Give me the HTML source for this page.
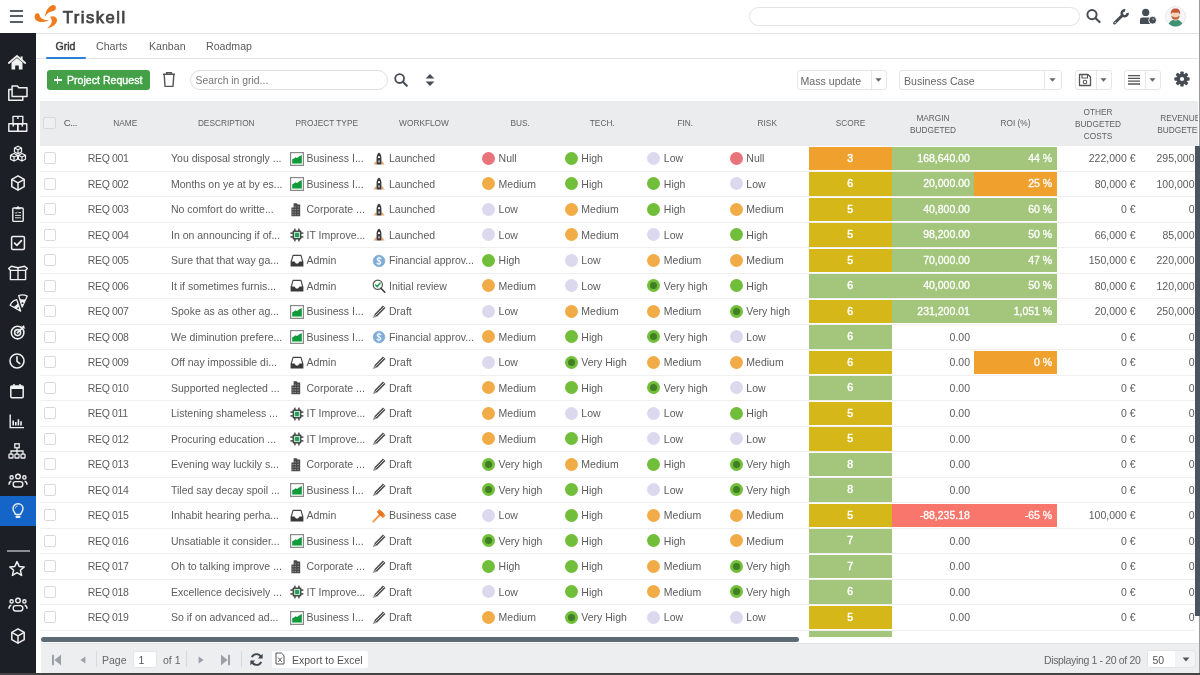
<!DOCTYPE html><html><head><meta charset="utf-8"><style>
*{box-sizing:border-box;margin:0;padding:0}
html,body{width:1200px;height:675px;overflow:hidden;background:#fff}
body{position:relative;font-family:"Liberation Sans",sans-serif;color:#555}
.a{position:absolute}
.t{position:absolute;white-space:nowrap;font-size:10.5px;line-height:12px;color:#5c5c5c}
.hd{position:absolute;top:100.5px;height:45.5px;background:#ebeced;border-right:1px solid #fbfbfb}
.ht{position:absolute;left:0;right:0;text-align:center;font-size:9.6px;line-height:11.9px;letter-spacing:0;color:#616161;white-space:nowrap;transform:scaleX(0.865)}
.rs{position:absolute;left:40px;width:1156px;height:1px;background:#eeeeee}
.cb{position:absolute;width:12px;height:12px;border:1px solid #d9d9d9;border-radius:2px;background:#fff}
.dot{position:absolute;width:13px;height:13px;border-radius:50%}
.cell{position:absolute;color:#fff;font-size:10.5px;line-height:23.5px;white-space:nowrap;-webkit-text-stroke:0.3px #fff}
.sb{position:absolute;left:0;width:36px;height:30px}
</style></head><body><div class="a" style="left:0;top:0;width:1200px;height:675px;overflow:hidden;will-change:transform">
<div class="a" style="left:0;top:0;width:1200px;height:34px;background:#fff;border-bottom:1px solid #e4e4e4"></div>
<div class="a" style="left:10px;top:9.9px;width:13.4px;height:2px;background:#585e66"></div>
<div class="a" style="left:10px;top:15.3px;width:13.4px;height:2px;background:#585e66"></div>
<div class="a" style="left:10px;top:20.5px;width:13.4px;height:2px;background:#585e66"></div>
<svg class="a" style="left:32px;top:3px" width="28" height="27" viewBox="0 0 28 27">
<g fill="#ef7d1f">
<path d="M13 13.8 C13.2 9.2 15.5 4.2 19.5 2.4 C22 1.4 24.2 2.8 23.9 5.2 C23.6 7.4 21.6 8 20 8.3 C17 8.8 14.6 10.8 13 13.8 Z"/>
<path d="M16.8 17.6 C12.2 19.6 6.2 19.8 3.6 16.8 C2 14.8 2.4 11.2 4.8 10.3 C6.4 9.8 7.4 10.9 7.6 12.3 C8 15.4 12.2 17.2 16.8 17.6 Z"/>
<path d="M18 13.8 C20.8 12.4 24.6 13.2 25 16.8 C25.3 20.6 21.2 24 15 25.4 C18.4 22.6 20.4 19.8 19.8 17.2 C19.5 15.8 18.8 14.6 18 13.8 Z"/>
</g></svg>
<div class="a" style="left:62.8px;top:8px;font-size:16.6px;line-height:20px;font-weight:normal;color:#444;letter-spacing:1.5px;-webkit-text-stroke:0.75px #444">Triskell</div>
<div class="a" style="left:748.5px;top:6.8px;width:331px;height:19.5px;border:1px solid #e3e3e3;border-radius:10px;background:#fff"></div>
<svg class="a" style="left:1085px;top:7px" width="18" height="18" viewBox="0 0 18 18"><circle cx="7" cy="7.6" r="4.6" fill="none" stroke="#474d55" stroke-width="2"/><path d="M10.6 11.2 L14.6 15" stroke="#474d55" stroke-width="2.2" stroke-linecap="round"/></svg>
<svg class="a" style="left:1112px;top:7px" width="18" height="18" viewBox="0 0 18 18"><path d="M2.6 16 L10.4 8.4" stroke="#474d55" stroke-width="2.9" stroke-linecap="round"/><path d="M15.6 5.9 A2.95 2.95 0 1 1 13.2 3.4" fill="none" stroke="#474d55" stroke-width="2.6"/><circle cx="3.2" cy="15.4" r="0.6" fill="#fff"/></svg>
<svg class="a" style="left:1138px;top:7px" width="20" height="18" viewBox="0 0 20 18"><circle cx="7.7" cy="5.4" r="3.6" fill="#474d55"/><path d="M2 17 V12.6 C2 11.4 3 10.6 4.4 10.6 H11 C12.2 10.6 13 11.2 13.2 12 L13.2 17 Z" fill="#474d55"/><circle cx="14.6" cy="13.2" r="3.9" fill="#474d55" stroke="#fff" stroke-width="0.9"/><circle cx="15.2" cy="12.2" r="0.9" fill="#9aa0a6"/></svg>
<svg class="a" style="left:1165.3px;top:5.8px" width="21" height="21" viewBox="0 0 21 21">
<defs><clipPath id="avc"><circle cx="10.5" cy="10.5" r="10"/></clipPath></defs>
<circle cx="10.5" cy="10.5" r="10" fill="#f7f6f9" stroke="#dcdcdc" stroke-width="0.7"/>
<g clip-path="url(#avc)">
<path d="M3.2 21 C3.2 15.5 7 13.8 10.5 13.8 C14 13.8 17.8 15.5 17.8 21 Z" fill="#3f9272"/>
<rect x="9" y="11.5" width="3" height="3" fill="#f3d2b5"/>
<path d="M6.4 6.5 H14.6 V10.5 C14.6 13 12.6 14 10.5 14 C8.4 14 6.4 13 6.4 10.5 Z" fill="#f5d4b8"/>
<path d="M6.4 9.4 C6.6 12.8 8.4 13.6 10.5 13.6 C12.6 13.6 14.4 12.8 14.6 9.4 C13.6 10.6 12.2 11.2 10.5 11.2 C8.8 11.2 7.4 10.6 6.4 9.4 Z" fill="#b8653f"/>
<path d="M5.8 8.6 C5.4 4 7.4 2.4 10.5 2.4 C13.6 2.4 15.6 4 15.2 8.6 C14.6 7.4 14 6.6 13.4 6.4 C11.5 6.8 9.5 6.8 7.6 6.4 C7 6.6 6.4 7.4 5.8 8.6 Z" fill="#c4583a"/>
</g></svg>
<div class="a" style="left:1198.6px;top:0;width:1.4px;height:675px;background:#9a9a9a"></div>
<div class="a" style="left:0;top:33.4px;width:36px;height:642px;background:#1c1f25"></div>
<div class="a" style="left:0;top:495.5px;width:36px;height:30.3px;background:#1565c9"></div>
<div class="a" style="left:7px;top:550.4px;width:23px;height:1.2px;background:#8b8f96"></div>
<svg class="a" style="left:8.0px;top:53.4px" width="20" height="20" viewBox="0 0 20 20"><path d="M0.8 10 L9 3 L17.2 10" fill="none" stroke="#f0f0f0" stroke-width="1.8" stroke-linejoin="round" stroke-linecap="round"/><path d="M3.5 9.5 L9 5 L14.5 9.5 V16.5 H10.8 V12.5 H7.2 V16.5 H3.5 Z" fill="#f0f0f0"/><rect x="12.6" y="3.4" width="2" height="4" fill="#f0f0f0"/></svg>
<svg class="a" style="left:8.0px;top:83.1px" width="20" height="20" viewBox="0 0 20 20"><path d="M4.1 6.4 H0.8 V17.2 H14.8 V13.6" fill="none" stroke="#f0f0f0" stroke-width="1.5" stroke-linejoin="round"/><path d="M4.1 13.6 V3 H9.4 L10.8 4.8 H19 V13.6 Z" fill="#1c1f25" stroke="#f0f0f0" stroke-width="1.5" stroke-linejoin="round"/></svg>
<svg class="a" style="left:8.0px;top:113.0px" width="20" height="20" viewBox="0 0 20 20"><g fill="none" stroke="#f0f0f0" stroke-width="1.4" stroke-linejoin="round"><rect x="5" y="3.4" width="9.8" height="7.3"/><rect x="0.8" y="10.7" width="9" height="7.5"/><rect x="9.8" y="10.7" width="9" height="7.5"/></g><path d="M9.9 3.4 V6 M5.3 10.7 V13.4 M14.3 10.7 V13.4" stroke="#f0f0f0" stroke-width="1.5"/></svg>
<svg class="a" style="left:8.0px;top:143.6px" width="20" height="20" viewBox="0 0 20 20"><g fill="none" stroke="#f0f0f0" stroke-width="1.1" stroke-linejoin="round" transform="translate(10 9.6) scale(1.1 1.05) translate(-10 -9.6)"><path d="M10 2.5 L13.2 4.2 V8 L10 9.7 L6.8 8 V4.2 Z M6.8 4.2 L10 5.9 L13.2 4.2 M10 5.9 V9.7"/><path d="M6.4 9.5 L9.6 11.2 V15 L6.4 16.7 L3.2 15 V11.2 Z M3.2 11.2 L6.4 12.9 L9.6 11.2 M6.4 12.9 V16.7"/><path d="M13.6 9.5 L16.8 11.2 V15 L13.6 16.7 L10.4 15 V11.2 Z M10.4 11.2 L13.6 12.9 L16.8 11.2 M13.6 12.9 V16.7"/></g></svg>
<svg class="a" style="left:8.0px;top:172.6px" width="20" height="20" viewBox="0 0 20 20"><g fill="none" stroke="#f0f0f0" stroke-width="1.5" stroke-linejoin="round"><path d="M10 2.8 L16.2 6.3 V13.7 L10 17.2 L3.8 13.7 V6.3 Z"/><path d="M3.8 6.3 L10 9.8 L16.2 6.3 M10 9.8 V17.2"/></g></svg>
<svg class="a" style="left:8.0px;top:203.8px" width="20" height="20" viewBox="0 0 20 20"><g fill="none" stroke="#f0f0f0" stroke-width="1.4" stroke-linejoin="round"><rect x="4.8" y="4" width="10.4" height="13.4" rx="1"/></g><path d="M7.4 5.2 V3.6 H8.8 L10 1.8 L11.2 3.6 H12.6 V5.2 Z" fill="#f0f0f0"/><path d="M7 8.4 L8 9.4 L9.4 7.8 M10.4 8.6 H13 M7 11.4 H13 M7 13.8 H13" stroke="#f0f0f0" stroke-width="0.9" fill="none"/></svg>
<svg class="a" style="left:8.0px;top:232.9px" width="20" height="20" viewBox="0 0 20 20"><rect x="3.6" y="3.6" width="12.8" height="12.8" rx="1.2" fill="none" stroke="#f0f0f0" stroke-width="1.5"/><path d="M6.6 10.2 L8.9 12.4 L13.4 7.6" fill="none" stroke="#f0f0f0" stroke-width="1.7" stroke-linecap="round" stroke-linejoin="round"/></svg>
<svg class="a" style="left:8.0px;top:262.0px" width="20" height="20" viewBox="0 0 20 20"><g fill="none" stroke="#f0f0f0" stroke-width="1.4" stroke-linejoin="round"><path d="M2.4 8.2 V17.6 H17.6 V8.2"/><path d="M10 5.8 V17.6"/><path d="M0.6 6.6 L3.4 4.2 L10 5.8 L16.6 4.2 L19.4 6.6 L17.4 8.4 H2.6 Z"/></g></svg>
<svg class="a" style="left:8.0px;top:291.8px" width="20" height="20" viewBox="0 0 20 20"><g transform="translate(5.2,10.2) rotate(-40) translate(-4.5,-0.6)"><path d="M0.2 1 Q4.5 -1 8.8 1 L4.5 12.2 Z" fill="none" stroke="#f0f0f0" stroke-width="1.3" stroke-linejoin="round"/><path d="M1.6 4.6 H7.4 L4.5 12 Z" fill="#f0f0f0"/><circle cx="4.5" cy="8.4" r="0.9" fill="#1c1f25"/></g><g transform="translate(15,3.4) rotate(4) translate(-4.5,-0.6)"><path d="M0.2 1 Q4.5 -1 8.8 1 L4.5 12.2 Z" fill="none" stroke="#f0f0f0" stroke-width="1.3" stroke-linejoin="round"/><path d="M1.6 4.6 H7.4 L4.5 12 Z" fill="#f0f0f0"/><circle cx="4.5" cy="8.4" r="0.9" fill="#1c1f25"/></g></svg>
<svg class="a" style="left:8.0px;top:321.8px" width="20" height="20" viewBox="0 0 20 20"><g fill="none" stroke="#f0f0f0" stroke-width="1.6"><circle cx="9.6" cy="10.6" r="6.3"/><circle cx="9.6" cy="10.6" r="3"/></g><circle cx="9.6" cy="10.6" r="1.1" fill="#f0f0f0"/><path d="M9.6 10.6 L14.6 5.6" stroke="#f0f0f0" stroke-width="1.6"/><path d="M13.2 3.2 L14.4 4.6 L16 3 L16.6 5.4 L17.4 6.4 L15.4 6.6 L14 5.2 Z" fill="#f0f0f0"/></svg>
<svg class="a" style="left:6.800000000000001px;top:351.0px" width="20" height="20" viewBox="0 0 20 20"><circle cx="10" cy="10" r="7" fill="none" stroke="#f0f0f0" stroke-width="1.6"/><path d="M10 5.8 V10.4 L12.8 12.6" fill="none" stroke="#f0f0f0" stroke-width="1.6" stroke-linecap="round"/></svg>
<svg class="a" style="left:6.800000000000001px;top:381.2px" width="20" height="20" viewBox="0 0 20 20"><rect x="3.8" y="5" width="12.4" height="11.8" rx="1.2" fill="none" stroke="#f0f0f0" stroke-width="1.5"/><rect x="3.8" y="5" width="12.4" height="3" fill="#f0f0f0"/><path d="M7 3 V6 M13 3 V6" stroke="#f0f0f0" stroke-width="1.5"/></svg>
<svg class="a" style="left:6.800000000000001px;top:411.0px" width="20" height="20" viewBox="0 0 20 20"><path d="M3.2 3.5 V16.6 H17" fill="none" stroke="#f0f0f0" stroke-width="1.4"/><path d="M6.2 9.5 V14.4 M8.8 11 V14.4 M11.4 8.2 V14.4 M14 10.2 V14.4" stroke="#f0f0f0" stroke-width="1.6"/></svg>
<svg class="a" style="left:7.399999999999999px;top:440.8px" width="20" height="20" viewBox="0 0 20 20"><g fill="none" stroke="#f0f0f0" stroke-width="1.3"><rect x="7.8" y="2.8" width="4.4" height="4"/><rect x="2" y="13.2" width="4" height="3.8" rx="0.6"/><rect x="8" y="13.2" width="4" height="3.8" rx="0.6"/><rect x="14" y="13.2" width="4" height="3.8" rx="0.6"/><path d="M10 6.8 V13.2 M4 13.2 V10 H16 V13.2"/></g></svg>
<svg class="a" style="left:8.0px;top:470.6px" width="20" height="20" viewBox="0 0 20 20"><g fill="none" stroke="#f0f0f0" stroke-width="1.4"><circle cx="10" cy="5.6" r="2.3"/><circle cx="3.6" cy="6.4" r="1.6"/><circle cx="16.4" cy="6.4" r="1.6"/><rect x="5.2" y="10.6" width="9.6" height="5.4" rx="2.4"/><path d="M1 13.8 C1 11.6 2 10.4 3.4 10.2 M19 13.8 C19 11.6 18 10.4 16.6 10.2"/></g></svg>
<svg class="a" style="left:8.0px;top:500.6px" width="20" height="20" viewBox="0 0 20 20"><path d="M10 2.8 C13 2.8 15 5 15 7.8 C15 10 13.2 11.4 12.6 13.4 H7.4 C6.8 11.4 5 10 5 7.8 C5 5 7 2.8 10 2.8 Z" fill="none" stroke="#f0f0f0" stroke-width="1.4"/><rect x="7.6" y="14.4" width="4.8" height="2.6" rx="0.8" fill="#f0f0f0"/><path d="M7.4 7.4 C7.4 6 8.4 5 9.6 5" fill="none" stroke="#f0f0f0" stroke-width="0.9"/></svg>
<svg class="a" style="left:7.0px;top:559.4px" width="20" height="20" viewBox="0 0 20 20"><path d="M10 2.6 L12.2 7.4 L17.2 7.9 L13.4 11.3 L14.6 16.4 L10 13.7 L5.4 16.4 L6.6 11.3 L2.8 7.9 L7.8 7.4 Z" fill="none" stroke="#f0f0f0" stroke-width="1.5" stroke-linejoin="round"/></svg>
<svg class="a" style="left:8.0px;top:595.4px" width="20" height="20" viewBox="0 0 20 20"><g fill="none" stroke="#f0f0f0" stroke-width="1.4"><circle cx="10" cy="5.6" r="2.3"/><circle cx="3.6" cy="6.4" r="1.6"/><circle cx="16.4" cy="6.4" r="1.6"/><rect x="5.2" y="10.6" width="9.6" height="5.4" rx="2.4"/><path d="M1 13.8 C1 11.6 2 10.4 3.4 10.2 M19 13.8 C19 11.6 18 10.4 16.6 10.2"/></g></svg>
<svg class="a" style="left:8.0px;top:625.8px" width="20" height="20" viewBox="0 0 20 20"><g fill="none" stroke="#f0f0f0" stroke-width="1.5" stroke-linejoin="round"><path d="M10 2.8 L16.2 6.3 V13.7 L10 17.2 L3.8 13.7 V6.3 Z"/><path d="M3.8 6.3 L10 9.8 L16.2 6.3 M10 9.8 V17.2"/></g></svg>
<div class="a" style="left:36px;top:57.8px;width:1162px;height:1px;background:#e6e6e6"></div>
<div class="a" style="left:45.8px;top:56.8px;width:40.2px;height:2.4px;background:#2a7fd6;border-radius:1px"></div>
<div class="a" style="left:55.5px;top:40px;font-size:10.6px;line-height:12px;color:#3a3a3a;-webkit-text-stroke:0.4px #3a3a3a;">Grid</div>
<div class="a" style="left:96px;top:40px;font-size:10.6px;line-height:12px;color:#5c5c5c;">Charts</div>
<div class="a" style="left:149px;top:40px;font-size:10.6px;line-height:12px;color:#5c5c5c;">Kanban</div>
<div class="a" style="left:206px;top:40px;font-size:10.6px;line-height:12px;color:#5c5c5c;">Roadmap</div>
<div class="a" style="left:46.5px;top:70px;width:103px;height:20px;background:#43a047;border-radius:3px"></div>
<div class="a" style="left:53.5px;top:79.2px;width:8px;height:1.7px;background:#fff"></div>
<div class="a" style="left:56.65px;top:76px;width:1.7px;height:8px;background:#fff"></div>
<div class="a" style="left:67px;top:74px;font-size:10.6px;line-height:12px;color:#fff;font-weight:normal;-webkit-text-stroke:0.35px #fff;letter-spacing:0px">Project Request</div>
<svg class="a" style="left:161px;top:71px" width="16" height="17" viewBox="0 0 16 17"><path d="M2 3.2 H14 M5.6 3.2 V1.6 H10.4 V3.2" fill="none" stroke="#555" stroke-width="1.4"/><path d="M3.2 3.6 L4 15.4 H12 L12.8 3.6" fill="none" stroke="#555" stroke-width="1.4" stroke-linejoin="round"/></svg>
<div class="a" style="left:190px;top:70.2px;width:198px;height:19.4px;border:1px solid #dedede;border-radius:10px;background:#fff"></div>
<div class="a" style="left:195.5px;top:74.7px;font-size:10.4px;line-height:12px;color:#777">Search in grid...</div>
<svg class="a" style="left:393px;top:72px" width="16" height="16" viewBox="0 0 16 16"><circle cx="6.6" cy="6.6" r="4.4" fill="none" stroke="#474d55" stroke-width="1.8"/><path d="M9.8 9.8 L13.8 13.8" stroke="#474d55" stroke-width="2.1" stroke-linecap="round"/></svg>
<svg class="a" style="left:424px;top:72px" width="12" height="16" viewBox="0 0 12 16"><path d="M1.6 6.6 L6 2 L10.4 6.6 Z M1.6 9.4 L6 14 L10.4 9.4 Z" fill="#474d55"/></svg>
<div class="a" style="left:796.5px;top:70.2px;width:90.5px;height:19.4px;border:1px solid #e6e6e6;border-radius:3px;background:#fff"></div>
<div class="a" style="left:870.5px;top:71px;width:1px;height:18px;background:#e6e6e6"></div>
<svg class="a" style="left:875.25px;top:78px" width="7" height="4" viewBox="0 0 7 4"><path d="M0.4 0.3 H6.6 L3.5 3.7 Z" fill="#666"/></svg>
<div class="a" style="left:800.5px;top:74.9px;font-size:10.6px;line-height:12px;color:#666">Mass update</div>
<div class="a" style="left:899px;top:70.2px;width:163px;height:19.4px;border:1px solid #e6e6e6;border-radius:3px;background:#fff"></div>
<div class="a" style="left:1043.5px;top:71px;width:1px;height:18px;background:#e6e6e6"></div>
<svg class="a" style="left:1049.25px;top:78px" width="7" height="4" viewBox="0 0 7 4"><path d="M0.4 0.3 H6.6 L3.5 3.7 Z" fill="#666"/></svg>
<div class="a" style="left:904px;top:74.9px;font-size:10.6px;line-height:12px;color:#666">Business Case</div>
<div class="a" style="left:1074.5px;top:70.2px;width:37.5px;height:19.4px;border:1px solid #e6e6e6;border-radius:3px;background:#fff"></div>
<div class="a" style="left:1095.5px;top:71px;width:1px;height:18px;background:#e6e6e6"></div>
<svg class="a" style="left:1100.25px;top:78px" width="7" height="4" viewBox="0 0 7 4"><path d="M0.4 0.3 H6.6 L3.5 3.7 Z" fill="#666"/></svg>
<svg class="a" style="left:1077px;top:72px" width="16" height="16" viewBox="0 0 16 16"><path d="M2.5 2.5 H11 L13.5 5 V13.5 H2.5 Z" fill="none" stroke="#555" stroke-width="1.3" stroke-linejoin="round"/><path d="M5 2.5 V6 H10.5 V2.5" fill="none" stroke="#555" stroke-width="1.1"/><circle cx="8" cy="10" r="1.8" fill="none" stroke="#555" stroke-width="1.1"/></svg>
<div class="a" style="left:1124px;top:70.2px;width:37px;height:19.4px;border:1px solid #e6e6e6;border-radius:3px;background:#fff"></div>
<div class="a" style="left:1144.5px;top:71px;width:1px;height:18px;background:#e6e6e6"></div>
<svg class="a" style="left:1149.25px;top:78px" width="7" height="4" viewBox="0 0 7 4"><path d="M0.4 0.3 H6.6 L3.5 3.7 Z" fill="#666"/></svg>
<svg class="a" style="left:1126px;top:72px" width="16" height="16" viewBox="0 0 16 16"><path d="M2 3.6 H14 M2 6.4 H14 M2 9.2 H14 M2 12 H14" stroke="#555" stroke-width="1.3"/></svg>
<svg class="a" style="left:1174.2px;top:71.2px" width="16" height="16" viewBox="0 0 16 16"><g fill="#474d55"><circle cx="8" cy="8" r="5.6"/><rect x="6.3" y="0.4" width="3.4" height="3.4" rx="0.9" transform="rotate(0 8 8)"/><rect x="6.3" y="0.4" width="3.4" height="3.4" rx="0.9" transform="rotate(45 8 8)"/><rect x="6.3" y="0.4" width="3.4" height="3.4" rx="0.9" transform="rotate(90 8 8)"/><rect x="6.3" y="0.4" width="3.4" height="3.4" rx="0.9" transform="rotate(135 8 8)"/><rect x="6.3" y="0.4" width="3.4" height="3.4" rx="0.9" transform="rotate(180 8 8)"/><rect x="6.3" y="0.4" width="3.4" height="3.4" rx="0.9" transform="rotate(225 8 8)"/><rect x="6.3" y="0.4" width="3.4" height="3.4" rx="0.9" transform="rotate(270 8 8)"/><rect x="6.3" y="0.4" width="3.4" height="3.4" rx="0.9" transform="rotate(315 8 8)"/></g><circle cx="8" cy="8" r="2.1" fill="#fff"/></svg>
<div class="a" style="left:40px;top:100.5px;width:1158px;height:45.5px;overflow:hidden">
<div class="hd" style="left:0px;top:0;width:45px"></div>
<div class="cb" style="left:3.3px;top:16.4px;width:12.5px;height:12.5px;background:#eeeff0;border-color:#d9d9d9"></div>
<div class="t" style="left:23.8px;top:16.6px;font-size:9.8px;color:#5a5a5a;letter-spacing:-0.5px">C...</div>
<div class="hd" style="left:44px;top:0;width:83.5px"></div>
<div class="ht" style="left:44px;width:82.5px;top:16.95px">NAME</div>
<div class="hd" style="left:126.5px;top:0;width:119.5px"></div>
<div class="ht" style="left:126.5px;width:118.5px;top:16.95px">DESCRIPTION</div>
<div class="hd" style="left:245px;top:0;width:84.5px"></div>
<div class="ht" style="left:245px;width:83.5px;top:16.95px">PROJECT TYPE</div>
<div class="hd" style="left:328.5px;top:0;width:111.0px"></div>
<div class="ht" style="left:328.5px;width:110.0px;top:16.95px">WORKFLOW</div>
<div class="hd" style="left:438.5px;top:0;width:83.5px"></div>
<div class="ht" style="left:438.5px;width:82.5px;top:16.95px">BUS.</div>
<div class="hd" style="left:521px;top:0;width:83.5px"></div>
<div class="ht" style="left:521px;width:82.5px;top:16.95px">TECH.</div>
<div class="hd" style="left:603.5px;top:0;width:83.5px"></div>
<div class="ht" style="left:603.5px;width:82.5px;top:16.95px">FIN.</div>
<div class="hd" style="left:686px;top:0;width:83.5px"></div>
<div class="ht" style="left:686px;width:82.5px;top:16.95px">RISK</div>
<div class="hd" style="left:768.5px;top:0;width:84.0px"></div>
<div class="ht" style="left:768.5px;width:83.0px;top:16.95px">SCORE</div>
<div class="hd" style="left:851.5px;top:0;width:83.0px"></div>
<div class="ht" style="left:851.5px;width:82.0px;top:11.799999999999999px">MARGIN<br>BUDGETED</div>
<div class="hd" style="left:933.5px;top:0;width:84.0px"></div>
<div class="ht" style="left:933.5px;width:83.0px;top:16.95px">ROI (%)</div>
<div class="hd" style="left:1016.5px;top:0;width:83.0px"></div>
<div class="ht" style="left:1016.5px;width:82.0px;top:5.25px">OTHER<br>BUDGETED<br>COSTS</div>
<div class="hd" style="left:1098.5px;top:0;width:83.5px"></div>
<div class="ht" style="left:1098.5px;width:82.5px;top:11.799999999999999px">REVENUE<br>BUDGETED</div>
</div>
<div class="a" style="left:40px;top:146px;width:1155px;height:490.5px;overflow:hidden">
<div class="a" style="left:0;top:24.80px;width:1155px;height:1px;background:#efefef"></div>
<div class="a" style="left:0;top:50.30px;width:1155px;height:1px;background:#efefef"></div>
<div class="a" style="left:0;top:75.80px;width:1155px;height:1px;background:#efefef"></div>
<div class="a" style="left:0;top:101.30px;width:1155px;height:1px;background:#efefef"></div>
<div class="a" style="left:0;top:126.80px;width:1155px;height:1px;background:#efefef"></div>
<div class="a" style="left:0;top:152.30px;width:1155px;height:1px;background:#efefef"></div>
<div class="a" style="left:0;top:177.80px;width:1155px;height:1px;background:#efefef"></div>
<div class="a" style="left:0;top:203.30px;width:1155px;height:1px;background:#efefef"></div>
<div class="a" style="left:0;top:228.80px;width:1155px;height:1px;background:#efefef"></div>
<div class="a" style="left:0;top:254.30px;width:1155px;height:1px;background:#efefef"></div>
<div class="a" style="left:0;top:279.80px;width:1155px;height:1px;background:#efefef"></div>
<div class="a" style="left:0;top:305.30px;width:1155px;height:1px;background:#efefef"></div>
<div class="a" style="left:0;top:330.80px;width:1155px;height:1px;background:#efefef"></div>
<div class="a" style="left:0;top:356.30px;width:1155px;height:1px;background:#efefef"></div>
<div class="a" style="left:0;top:381.80px;width:1155px;height:1px;background:#efefef"></div>
<div class="a" style="left:0;top:407.30px;width:1155px;height:1px;background:#efefef"></div>
<div class="a" style="left:0;top:432.80px;width:1155px;height:1px;background:#efefef"></div>
<div class="a" style="left:0;top:458.30px;width:1155px;height:1px;background:#efefef"></div>
<div class="a" style="left:0;top:483.80px;width:1155px;height:1px;background:#efefef"></div>
<div class="a" style="left:0;top:509.30px;width:1155px;height:1px;background:#efefef"></div>
<div class="cb" style="left:4.299999999999997px;top:6.30px"></div>
<div class="t" style="left:47.8px;top:6.30px;letter-spacing:-0.35px">REQ 001</div>
<div class="t" style="left:131px;top:6.30px">You disposal strongly ...</div>
<div class="a" style="left:249.5px;top:5.60px;width:14px;height:14px"><svg width="14" height="14" viewBox="0 0 14 14"><rect x="0.6" y="0.6" width="12.8" height="12.8" fill="#fff" stroke="#8a8a8a" stroke-width="1.2"/><path d="M2.2 11.8 V7.2 L4 6.4 L5.5 5.2 L7 6 L9 4.6 L11.8 3 V11.8 Z" fill="#0f9a3c"/><path d="M2.2 11.8 H11.8" stroke="#a8e6b8" stroke-width="0.8"/></svg></div>
<div class="t" style="left:266.5px;top:6.30px">Business I...</div>
<div class="a" style="left:331.5px;top:5.60px;width:14px;height:14px"><svg width="14" height="14" viewBox="0 0 14 14"><path d="M1.4 12.6 L4.6 8.2 V12.6 Z M12.6 12.6 L9.4 8.2 V12.6 Z" fill="#f0a56a"/><path d="M7 0.4 C8.6 1.6 9.4 3.4 9.4 5.6 V12.6 H4.6 V5.6 C4.6 3.4 5.4 1.6 7 0.4 Z" fill="#3a3a3a"/><circle cx="7" cy="5.2" r="1.1" fill="#fff"/><rect x="6.3" y="8.4" width="1.4" height="2" fill="#ddd"/></svg></div>
<div class="t" style="left:349px;top:6.30px">Launched</div>
<div class="dot" style="left:441.8px;top:5.90px;background:#e9737b"></div>
<div class="t" style="left:458.6px;top:6.30px">Null</div>
<div class="dot" style="left:524.5px;top:5.90px;background:#71be3a"></div>
<div class="t" style="left:541.3px;top:6.30px">High</div>
<div class="dot" style="left:607px;top:5.90px;background:#dcd9ef"></div>
<div class="t" style="left:623.8px;top:6.30px">Low</div>
<div class="dot" style="left:689.5px;top:5.90px;background:#e9737b"></div>
<div class="t" style="left:706.3px;top:6.30px">Null</div>
<div class="cell" style="left:769px;top:0.60px;width:82.5px;height:23.5px;background:#efa02d;text-align:center;-webkit-text-stroke:0.45px #fff">3</div>
<div class="cell" style="left:851.5px;top:0.60px;width:82.2px;height:23.5px;background:#a3c67c;text-align:right;padding-right:3.8px">168,640.00</div>
<div class="cell" style="left:933.7px;top:0.60px;width:83px;height:23.5px;background:#a3c67c;text-align:right;padding-right:4.5px">44 %</div>
<div class="t" style="left:1016.5px;top:6.30px;width:79px;text-align:right">222,000 €</div>
<div class="t" style="left:1098.5px;top:6.30px;width:56px;text-align:right">295,000</div>
<div class="cb" style="left:4.299999999999997px;top:31.80px"></div>
<div class="t" style="left:47.8px;top:31.80px;letter-spacing:-0.35px">REQ 002</div>
<div class="t" style="left:131px;top:31.80px">Months on ye at by es...</div>
<div class="a" style="left:249.5px;top:31.10px;width:14px;height:14px"><svg width="14" height="14" viewBox="0 0 14 14"><rect x="0.6" y="0.6" width="12.8" height="12.8" fill="#fff" stroke="#8a8a8a" stroke-width="1.2"/><path d="M2.2 11.8 V7.2 L4 6.4 L5.5 5.2 L7 6 L9 4.6 L11.8 3 V11.8 Z" fill="#0f9a3c"/><path d="M2.2 11.8 H11.8" stroke="#a8e6b8" stroke-width="0.8"/></svg></div>
<div class="t" style="left:266.5px;top:31.80px">Business I...</div>
<div class="a" style="left:331.5px;top:31.10px;width:14px;height:14px"><svg width="14" height="14" viewBox="0 0 14 14"><path d="M1.4 12.6 L4.6 8.2 V12.6 Z M12.6 12.6 L9.4 8.2 V12.6 Z" fill="#f0a56a"/><path d="M7 0.4 C8.6 1.6 9.4 3.4 9.4 5.6 V12.6 H4.6 V5.6 C4.6 3.4 5.4 1.6 7 0.4 Z" fill="#3a3a3a"/><circle cx="7" cy="5.2" r="1.1" fill="#fff"/><rect x="6.3" y="8.4" width="1.4" height="2" fill="#ddd"/></svg></div>
<div class="t" style="left:349px;top:31.80px">Launched</div>
<div class="dot" style="left:441.8px;top:31.40px;background:#f2ac47"></div>
<div class="t" style="left:458.6px;top:31.80px">Medium</div>
<div class="dot" style="left:524.5px;top:31.40px;background:#71be3a"></div>
<div class="t" style="left:541.3px;top:31.80px">High</div>
<div class="dot" style="left:607px;top:31.40px;background:#71be3a"></div>
<div class="t" style="left:623.8px;top:31.80px">High</div>
<div class="dot" style="left:689.5px;top:31.40px;background:#dcd9ef"></div>
<div class="t" style="left:706.3px;top:31.80px">Low</div>
<div class="cell" style="left:769px;top:26.10px;width:82.5px;height:23.5px;background:#d6b719;text-align:center;-webkit-text-stroke:0.45px #fff">6</div>
<div class="cell" style="left:851.5px;top:26.10px;width:82.2px;height:23.5px;background:#a3c67c;text-align:right;padding-right:3.8px">20,000.00</div>
<div class="cell" style="left:933.7px;top:26.10px;width:83px;height:23.5px;background:#efa02d;text-align:right;padding-right:4.5px">25 %</div>
<div class="t" style="left:1016.5px;top:31.80px;width:79px;text-align:right">80,000 €</div>
<div class="t" style="left:1098.5px;top:31.80px;width:56px;text-align:right">100,000</div>
<div class="cb" style="left:4.299999999999997px;top:57.30px"></div>
<div class="t" style="left:47.8px;top:57.30px;letter-spacing:-0.35px">REQ 003</div>
<div class="t" style="left:131px;top:57.30px">No comfort do writte...</div>
<div class="a" style="left:249.5px;top:56.60px;width:14px;height:14px"><svg width="14" height="14" viewBox="0 0 14 14"><path d="M1.4 4.4 H3.6 V0.2 H6.6 L7.8 1.6 H10.2 V13.2 H1.4 Z" fill="#4a4a4a"/><g fill="#a0a0a0" transform="translate(-0.6 0)"><rect x="3" y="6" width="1.2" height="1"/><rect x="5.3" y="3.4" width="1.2" height="1"/><rect x="8.1" y="3.4" width="1.2" height="1"/><rect x="3" y="8.6" width="1.2" height="1"/><rect x="5.3" y="6" width="1.2" height="1"/><rect x="8.1" y="6" width="1.2" height="1"/><rect x="3" y="11.1" width="1.2" height="1"/><rect x="5.3" y="8.6" width="1.2" height="1"/><rect x="8.1" y="8.6" width="1.2" height="1"/><rect x="5.3" y="11.1" width="1.2" height="1"/><rect x="8.1" y="11.1" width="1.2" height="1"/></g></svg></div>
<div class="t" style="left:266.5px;top:57.30px">Corporate ...</div>
<div class="a" style="left:331.5px;top:56.60px;width:14px;height:14px"><svg width="14" height="14" viewBox="0 0 14 14"><path d="M1.4 12.6 L4.6 8.2 V12.6 Z M12.6 12.6 L9.4 8.2 V12.6 Z" fill="#f0a56a"/><path d="M7 0.4 C8.6 1.6 9.4 3.4 9.4 5.6 V12.6 H4.6 V5.6 C4.6 3.4 5.4 1.6 7 0.4 Z" fill="#3a3a3a"/><circle cx="7" cy="5.2" r="1.1" fill="#fff"/><rect x="6.3" y="8.4" width="1.4" height="2" fill="#ddd"/></svg></div>
<div class="t" style="left:349px;top:57.30px">Launched</div>
<div class="dot" style="left:441.8px;top:56.90px;background:#dcd9ef"></div>
<div class="t" style="left:458.6px;top:57.30px">Low</div>
<div class="dot" style="left:524.5px;top:56.90px;background:#f2ac47"></div>
<div class="t" style="left:541.3px;top:57.30px">Medium</div>
<div class="dot" style="left:607px;top:56.90px;background:#71be3a"></div>
<div class="t" style="left:623.8px;top:57.30px">High</div>
<div class="dot" style="left:689.5px;top:56.90px;background:#f2ac47"></div>
<div class="t" style="left:706.3px;top:57.30px">Medium</div>
<div class="cell" style="left:769px;top:51.60px;width:82.5px;height:23.5px;background:#d6b719;text-align:center;-webkit-text-stroke:0.45px #fff">5</div>
<div class="cell" style="left:851.5px;top:51.60px;width:82.2px;height:23.5px;background:#a3c67c;text-align:right;padding-right:3.8px">40,800.00</div>
<div class="cell" style="left:933.7px;top:51.60px;width:83px;height:23.5px;background:#a3c67c;text-align:right;padding-right:4.5px">60 %</div>
<div class="t" style="left:1016.5px;top:57.30px;width:79px;text-align:right">0 €</div>
<div class="t" style="left:1098.5px;top:57.30px;width:56px;text-align:right">0</div>
<div class="cb" style="left:4.299999999999997px;top:82.80px"></div>
<div class="t" style="left:47.8px;top:82.80px;letter-spacing:-0.35px">REQ 004</div>
<div class="t" style="left:131px;top:82.80px">In on announcing if of...</div>
<div class="a" style="left:249.5px;top:82.10px;width:14px;height:14px"><svg width="14" height="14" viewBox="0 0 14 14"><g fill="#3e3e3e"><rect x="4.2" y="0.6" width="1.4" height="3"/><rect x="8.2" y="0.6" width="1.4" height="3"/><rect x="4.2" y="10.4" width="1.4" height="3"/><rect x="8.2" y="10.4" width="1.4" height="3"/><rect x="0.4" y="4.4" width="3" height="1.4"/><rect x="0.4" y="8.2" width="3" height="1.4"/><rect x="10.4" y="4.4" width="3" height="1.4"/><rect x="10.4" y="8.2" width="3" height="1.4"/><rect x="2.6" y="2.6" width="8.8" height="8.8" rx="0.8"/></g><rect x="3.9" y="3.9" width="6.2" height="6.2" fill="#aee6c4"/><rect x="5" y="5" width="4" height="4" rx="0.8" fill="#2a9a5c"/></svg></div>
<div class="t" style="left:266.5px;top:82.80px">IT Improve...</div>
<div class="a" style="left:331.5px;top:82.10px;width:14px;height:14px"><svg width="14" height="14" viewBox="0 0 14 14"><path d="M1.4 12.6 L4.6 8.2 V12.6 Z M12.6 12.6 L9.4 8.2 V12.6 Z" fill="#f0a56a"/><path d="M7 0.4 C8.6 1.6 9.4 3.4 9.4 5.6 V12.6 H4.6 V5.6 C4.6 3.4 5.4 1.6 7 0.4 Z" fill="#3a3a3a"/><circle cx="7" cy="5.2" r="1.1" fill="#fff"/><rect x="6.3" y="8.4" width="1.4" height="2" fill="#ddd"/></svg></div>
<div class="t" style="left:349px;top:82.80px">Launched</div>
<div class="dot" style="left:441.8px;top:82.40px;background:#dcd9ef"></div>
<div class="t" style="left:458.6px;top:82.80px">Low</div>
<div class="dot" style="left:524.5px;top:82.40px;background:#f2ac47"></div>
<div class="t" style="left:541.3px;top:82.80px">Medium</div>
<div class="dot" style="left:607px;top:82.40px;background:#dcd9ef"></div>
<div class="t" style="left:623.8px;top:82.80px">Low</div>
<div class="dot" style="left:689.5px;top:82.40px;background:#71be3a"></div>
<div class="t" style="left:706.3px;top:82.80px">High</div>
<div class="cell" style="left:769px;top:77.10px;width:82.5px;height:23.5px;background:#d6b719;text-align:center;-webkit-text-stroke:0.45px #fff">5</div>
<div class="cell" style="left:851.5px;top:77.10px;width:82.2px;height:23.5px;background:#a3c67c;text-align:right;padding-right:3.8px">98,200.00</div>
<div class="cell" style="left:933.7px;top:77.10px;width:83px;height:23.5px;background:#a3c67c;text-align:right;padding-right:4.5px">50 %</div>
<div class="t" style="left:1016.5px;top:82.80px;width:79px;text-align:right">66,000 €</div>
<div class="t" style="left:1098.5px;top:82.80px;width:56px;text-align:right">85,000</div>
<div class="cb" style="left:4.299999999999997px;top:108.30px"></div>
<div class="t" style="left:47.8px;top:108.30px;letter-spacing:-0.35px">REQ 005</div>
<div class="t" style="left:131px;top:108.30px">Sure that that way ga...</div>
<div class="a" style="left:249.5px;top:107.60px;width:14px;height:14px"><svg width="14" height="14" viewBox="0 0 14 14"><path d="M1.2 8 L3 1.4 H11 L12.8 8" fill="none" stroke="#444" stroke-width="1.1" stroke-linejoin="round"/><path d="M0.6 7.4 H4.4 L6 9.6 H8 L9.6 7.4 H13.4 V12.4 H0.6 Z" fill="#3a3a3a"/></svg></div>
<div class="t" style="left:266.5px;top:108.30px">Admin</div>
<div class="a" style="left:331.5px;top:107.60px;width:14px;height:14px"><svg width="14" height="14" viewBox="0 0 14 14"><circle cx="7" cy="7" r="5.8" fill="#80acd8" stroke="#6e9dcd" stroke-width="0.6"/><path d="M8.9 4.6 C8.4 4 7.7 3.8 7 3.8 C6 3.8 5.2 4.3 5.2 5.2 C5.2 6.1 6 6.4 7 6.8 C8 7.2 8.8 7.6 8.8 8.6 C8.8 9.6 8 10.1 7 10.1 C6.1 10.1 5.4 9.8 5 9.2" fill="none" stroke="#eef5ff" stroke-width="1.3" stroke-linecap="round"/><path d="M7 2.6 V11.4" stroke="#eef5ff" stroke-width="0.9"/></svg></div>
<div class="t" style="left:349px;top:108.30px">Financial approv...</div>
<div class="dot" style="left:441.8px;top:107.90px;background:#71be3a"></div>
<div class="t" style="left:458.6px;top:108.30px">High</div>
<div class="dot" style="left:524.5px;top:107.90px;background:#dcd9ef"></div>
<div class="t" style="left:541.3px;top:108.30px">Low</div>
<div class="dot" style="left:607px;top:107.90px;background:#f2ac47"></div>
<div class="t" style="left:623.8px;top:108.30px">Medium</div>
<div class="dot" style="left:689.5px;top:107.90px;background:#f2ac47"></div>
<div class="t" style="left:706.3px;top:108.30px">Medium</div>
<div class="cell" style="left:769px;top:102.60px;width:82.5px;height:23.5px;background:#d6b719;text-align:center;-webkit-text-stroke:0.45px #fff">5</div>
<div class="cell" style="left:851.5px;top:102.60px;width:82.2px;height:23.5px;background:#a3c67c;text-align:right;padding-right:3.8px">70,000.00</div>
<div class="cell" style="left:933.7px;top:102.60px;width:83px;height:23.5px;background:#a3c67c;text-align:right;padding-right:4.5px">47 %</div>
<div class="t" style="left:1016.5px;top:108.30px;width:79px;text-align:right">150,000 €</div>
<div class="t" style="left:1098.5px;top:108.30px;width:56px;text-align:right">220,000</div>
<div class="cb" style="left:4.299999999999997px;top:133.80px"></div>
<div class="t" style="left:47.8px;top:133.80px;letter-spacing:-0.35px">REQ 006</div>
<div class="t" style="left:131px;top:133.80px">It if sometimes furnis...</div>
<div class="a" style="left:249.5px;top:133.10px;width:14px;height:14px"><svg width="14" height="14" viewBox="0 0 14 14"><path d="M1.2 8 L3 1.4 H11 L12.8 8" fill="none" stroke="#444" stroke-width="1.1" stroke-linejoin="round"/><path d="M0.6 7.4 H4.4 L6 9.6 H8 L9.6 7.4 H13.4 V12.4 H0.6 Z" fill="#3a3a3a"/></svg></div>
<div class="t" style="left:266.5px;top:133.80px">Admin</div>
<div class="a" style="left:331.5px;top:133.10px;width:14px;height:14px"><svg width="14" height="14" viewBox="0 0 14 14"><circle cx="5.8" cy="5.8" r="4.6" fill="#f4fff8" stroke="#555" stroke-width="1.2"/><path d="M8.9 9.2 L12.8 13.2" stroke="#3a3a3a" stroke-width="1.6" stroke-linecap="round"/><path d="M3.6 6 L5.2 7.6 L8 4.2" fill="none" stroke="#2a9a5c" stroke-width="1.6" stroke-linecap="round"/></svg></div>
<div class="t" style="left:349px;top:133.80px">Initial review</div>
<div class="dot" style="left:441.8px;top:133.40px;background:#f2ac47"></div>
<div class="t" style="left:458.6px;top:133.80px">Medium</div>
<div class="dot" style="left:524.5px;top:133.40px;background:#dcd9ef"></div>
<div class="t" style="left:541.3px;top:133.80px">Low</div>
<div class="dot" style="left:607px;top:133.40px;background:#71be3a"></div>
<div class="dot" style="left:610px;top:136.40px;width:7px;height:7px;background:#417f24"></div>
<div class="t" style="left:623.8px;top:133.80px">Very high</div>
<div class="dot" style="left:689.5px;top:133.40px;background:#71be3a"></div>
<div class="t" style="left:706.3px;top:133.80px">High</div>
<div class="cell" style="left:769px;top:128.10px;width:82.5px;height:23.5px;background:#a3c67c;text-align:center;-webkit-text-stroke:0.45px #fff">6</div>
<div class="cell" style="left:851.5px;top:128.10px;width:82.2px;height:23.5px;background:#a3c67c;text-align:right;padding-right:3.8px">40,000.00</div>
<div class="cell" style="left:933.7px;top:128.10px;width:83px;height:23.5px;background:#a3c67c;text-align:right;padding-right:4.5px">50 %</div>
<div class="t" style="left:1016.5px;top:133.80px;width:79px;text-align:right">80,000 €</div>
<div class="t" style="left:1098.5px;top:133.80px;width:56px;text-align:right">120,000</div>
<div class="cb" style="left:4.299999999999997px;top:159.30px"></div>
<div class="t" style="left:47.8px;top:159.30px;letter-spacing:-0.35px">REQ 007</div>
<div class="t" style="left:131px;top:159.30px">Spoke as as other ag...</div>
<div class="a" style="left:249.5px;top:158.60px;width:14px;height:14px"><svg width="14" height="14" viewBox="0 0 14 14"><rect x="0.6" y="0.6" width="12.8" height="12.8" fill="#fff" stroke="#8a8a8a" stroke-width="1.2"/><path d="M2.2 11.8 V7.2 L4 6.4 L5.5 5.2 L7 6 L9 4.6 L11.8 3 V11.8 Z" fill="#0f9a3c"/><path d="M2.2 11.8 H11.8" stroke="#a8e6b8" stroke-width="0.8"/></svg></div>
<div class="t" style="left:266.5px;top:159.30px">Business I...</div>
<div class="a" style="left:331.5px;top:158.60px;width:14px;height:14px"><svg width="14" height="14" viewBox="0 0 14 14"><path d="M2.33 9.13 L10.93 0.53 L13.47 3.07 L4.87 11.67 Z" fill="#505050"/><path d="M3.6 10.4 L12.2 1.8" stroke="#e0e0e0" stroke-width="0.9"/><path d="M2.33 9.13 L4.87 11.67 L0.9 13.1 Z" fill="#8a8a8a"/></svg></div>
<div class="t" style="left:349px;top:159.30px">Draft</div>
<div class="dot" style="left:441.8px;top:158.90px;background:#dcd9ef"></div>
<div class="t" style="left:458.6px;top:159.30px">Low</div>
<div class="dot" style="left:524.5px;top:158.90px;background:#f2ac47"></div>
<div class="t" style="left:541.3px;top:159.30px">Medium</div>
<div class="dot" style="left:607px;top:158.90px;background:#f2ac47"></div>
<div class="t" style="left:623.8px;top:159.30px">Medium</div>
<div class="dot" style="left:689.5px;top:158.90px;background:#71be3a"></div>
<div class="dot" style="left:692.5px;top:161.90px;width:7px;height:7px;background:#417f24"></div>
<div class="t" style="left:706.3px;top:159.30px">Very high</div>
<div class="cell" style="left:769px;top:153.60px;width:82.5px;height:23.5px;background:#d6b719;text-align:center;-webkit-text-stroke:0.45px #fff">6</div>
<div class="cell" style="left:851.5px;top:153.60px;width:82.2px;height:23.5px;background:#a3c67c;text-align:right;padding-right:3.8px">231,200.01</div>
<div class="cell" style="left:933.7px;top:153.60px;width:83px;height:23.5px;background:#a3c67c;text-align:right;padding-right:4.5px">1,051 %</div>
<div class="t" style="left:1016.5px;top:159.30px;width:79px;text-align:right">20,000 €</div>
<div class="t" style="left:1098.5px;top:159.30px;width:56px;text-align:right">250,000</div>
<div class="cb" style="left:4.299999999999997px;top:184.80px"></div>
<div class="t" style="left:47.8px;top:184.80px;letter-spacing:-0.35px">REQ 008</div>
<div class="t" style="left:131px;top:184.80px">We diminution prefere...</div>
<div class="a" style="left:249.5px;top:184.10px;width:14px;height:14px"><svg width="14" height="14" viewBox="0 0 14 14"><rect x="0.6" y="0.6" width="12.8" height="12.8" fill="#fff" stroke="#8a8a8a" stroke-width="1.2"/><path d="M2.2 11.8 V7.2 L4 6.4 L5.5 5.2 L7 6 L9 4.6 L11.8 3 V11.8 Z" fill="#0f9a3c"/><path d="M2.2 11.8 H11.8" stroke="#a8e6b8" stroke-width="0.8"/></svg></div>
<div class="t" style="left:266.5px;top:184.80px">Business I...</div>
<div class="a" style="left:331.5px;top:184.10px;width:14px;height:14px"><svg width="14" height="14" viewBox="0 0 14 14"><circle cx="7" cy="7" r="5.8" fill="#80acd8" stroke="#6e9dcd" stroke-width="0.6"/><path d="M8.9 4.6 C8.4 4 7.7 3.8 7 3.8 C6 3.8 5.2 4.3 5.2 5.2 C5.2 6.1 6 6.4 7 6.8 C8 7.2 8.8 7.6 8.8 8.6 C8.8 9.6 8 10.1 7 10.1 C6.1 10.1 5.4 9.8 5 9.2" fill="none" stroke="#eef5ff" stroke-width="1.3" stroke-linecap="round"/><path d="M7 2.6 V11.4" stroke="#eef5ff" stroke-width="0.9"/></svg></div>
<div class="t" style="left:349px;top:184.80px">Financial approv...</div>
<div class="dot" style="left:441.8px;top:184.40px;background:#f2ac47"></div>
<div class="t" style="left:458.6px;top:184.80px">Medium</div>
<div class="dot" style="left:524.5px;top:184.40px;background:#71be3a"></div>
<div class="t" style="left:541.3px;top:184.80px">High</div>
<div class="dot" style="left:607px;top:184.40px;background:#71be3a"></div>
<div class="dot" style="left:610px;top:187.40px;width:7px;height:7px;background:#417f24"></div>
<div class="t" style="left:623.8px;top:184.80px">Very high</div>
<div class="dot" style="left:689.5px;top:184.40px;background:#dcd9ef"></div>
<div class="t" style="left:706.3px;top:184.80px">Low</div>
<div class="cell" style="left:769px;top:179.10px;width:82.5px;height:23.5px;background:#a3c67c;text-align:center;-webkit-text-stroke:0.45px #fff">6</div>
<div class="t" style="left:851.5px;top:184.80px;width:78.5px;text-align:right">0.00</div>
<div class="t" style="left:1016.5px;top:184.80px;width:79px;text-align:right">0 €</div>
<div class="t" style="left:1098.5px;top:184.80px;width:56px;text-align:right">0</div>
<div class="cb" style="left:4.299999999999997px;top:210.30px"></div>
<div class="t" style="left:47.8px;top:210.30px;letter-spacing:-0.35px">REQ 009</div>
<div class="t" style="left:131px;top:210.30px">Off nay impossible di...</div>
<div class="a" style="left:249.5px;top:209.60px;width:14px;height:14px"><svg width="14" height="14" viewBox="0 0 14 14"><path d="M1.2 8 L3 1.4 H11 L12.8 8" fill="none" stroke="#444" stroke-width="1.1" stroke-linejoin="round"/><path d="M0.6 7.4 H4.4 L6 9.6 H8 L9.6 7.4 H13.4 V12.4 H0.6 Z" fill="#3a3a3a"/></svg></div>
<div class="t" style="left:266.5px;top:210.30px">Admin</div>
<div class="a" style="left:331.5px;top:209.60px;width:14px;height:14px"><svg width="14" height="14" viewBox="0 0 14 14"><path d="M2.33 9.13 L10.93 0.53 L13.47 3.07 L4.87 11.67 Z" fill="#505050"/><path d="M3.6 10.4 L12.2 1.8" stroke="#e0e0e0" stroke-width="0.9"/><path d="M2.33 9.13 L4.87 11.67 L0.9 13.1 Z" fill="#8a8a8a"/></svg></div>
<div class="t" style="left:349px;top:210.30px">Draft</div>
<div class="dot" style="left:441.8px;top:209.90px;background:#dcd9ef"></div>
<div class="t" style="left:458.6px;top:210.30px">Low</div>
<div class="dot" style="left:524.5px;top:209.90px;background:#71be3a"></div>
<div class="dot" style="left:527.5px;top:212.90px;width:7px;height:7px;background:#417f24"></div>
<div class="t" style="left:541.3px;top:210.30px">Very High</div>
<div class="dot" style="left:607px;top:209.90px;background:#f2ac47"></div>
<div class="t" style="left:623.8px;top:210.30px">Medium</div>
<div class="dot" style="left:689.5px;top:209.90px;background:#f2ac47"></div>
<div class="t" style="left:706.3px;top:210.30px">Medium</div>
<div class="cell" style="left:769px;top:204.60px;width:82.5px;height:23.5px;background:#d6b719;text-align:center;-webkit-text-stroke:0.45px #fff">6</div>
<div class="t" style="left:851.5px;top:210.30px;width:78.5px;text-align:right">0.00</div>
<div class="cell" style="left:933.7px;top:204.60px;width:83px;height:23.5px;background:#efa02d;text-align:right;padding-right:4.5px">0 %</div>
<div class="t" style="left:1016.5px;top:210.30px;width:79px;text-align:right">0 €</div>
<div class="t" style="left:1098.5px;top:210.30px;width:56px;text-align:right">0</div>
<div class="cb" style="left:4.299999999999997px;top:235.80px"></div>
<div class="t" style="left:47.8px;top:235.80px;letter-spacing:-0.35px">REQ 010</div>
<div class="t" style="left:131px;top:235.80px">Supported neglected ...</div>
<div class="a" style="left:249.5px;top:235.10px;width:14px;height:14px"><svg width="14" height="14" viewBox="0 0 14 14"><path d="M1.4 4.4 H3.6 V0.2 H6.6 L7.8 1.6 H10.2 V13.2 H1.4 Z" fill="#4a4a4a"/><g fill="#a0a0a0" transform="translate(-0.6 0)"><rect x="3" y="6" width="1.2" height="1"/><rect x="5.3" y="3.4" width="1.2" height="1"/><rect x="8.1" y="3.4" width="1.2" height="1"/><rect x="3" y="8.6" width="1.2" height="1"/><rect x="5.3" y="6" width="1.2" height="1"/><rect x="8.1" y="6" width="1.2" height="1"/><rect x="3" y="11.1" width="1.2" height="1"/><rect x="5.3" y="8.6" width="1.2" height="1"/><rect x="8.1" y="8.6" width="1.2" height="1"/><rect x="5.3" y="11.1" width="1.2" height="1"/><rect x="8.1" y="11.1" width="1.2" height="1"/></g></svg></div>
<div class="t" style="left:266.5px;top:235.80px">Corporate ...</div>
<div class="a" style="left:331.5px;top:235.10px;width:14px;height:14px"><svg width="14" height="14" viewBox="0 0 14 14"><path d="M2.33 9.13 L10.93 0.53 L13.47 3.07 L4.87 11.67 Z" fill="#505050"/><path d="M3.6 10.4 L12.2 1.8" stroke="#e0e0e0" stroke-width="0.9"/><path d="M2.33 9.13 L4.87 11.67 L0.9 13.1 Z" fill="#8a8a8a"/></svg></div>
<div class="t" style="left:349px;top:235.80px">Draft</div>
<div class="dot" style="left:441.8px;top:235.40px;background:#f2ac47"></div>
<div class="t" style="left:458.6px;top:235.80px">Medium</div>
<div class="dot" style="left:524.5px;top:235.40px;background:#71be3a"></div>
<div class="t" style="left:541.3px;top:235.80px">High</div>
<div class="dot" style="left:607px;top:235.40px;background:#71be3a"></div>
<div class="dot" style="left:610px;top:238.40px;width:7px;height:7px;background:#417f24"></div>
<div class="t" style="left:623.8px;top:235.80px">Very high</div>
<div class="dot" style="left:689.5px;top:235.40px;background:#dcd9ef"></div>
<div class="t" style="left:706.3px;top:235.80px">Low</div>
<div class="cell" style="left:769px;top:230.10px;width:82.5px;height:23.5px;background:#a3c67c;text-align:center;-webkit-text-stroke:0.45px #fff">6</div>
<div class="t" style="left:851.5px;top:235.80px;width:78.5px;text-align:right">0.00</div>
<div class="t" style="left:1016.5px;top:235.80px;width:79px;text-align:right">0 €</div>
<div class="t" style="left:1098.5px;top:235.80px;width:56px;text-align:right">0</div>
<div class="cb" style="left:4.299999999999997px;top:261.30px"></div>
<div class="t" style="left:47.8px;top:261.30px;letter-spacing:-0.35px">REQ 011</div>
<div class="t" style="left:131px;top:261.30px">Listening shameless ...</div>
<div class="a" style="left:249.5px;top:260.60px;width:14px;height:14px"><svg width="14" height="14" viewBox="0 0 14 14"><g fill="#3e3e3e"><rect x="4.2" y="0.6" width="1.4" height="3"/><rect x="8.2" y="0.6" width="1.4" height="3"/><rect x="4.2" y="10.4" width="1.4" height="3"/><rect x="8.2" y="10.4" width="1.4" height="3"/><rect x="0.4" y="4.4" width="3" height="1.4"/><rect x="0.4" y="8.2" width="3" height="1.4"/><rect x="10.4" y="4.4" width="3" height="1.4"/><rect x="10.4" y="8.2" width="3" height="1.4"/><rect x="2.6" y="2.6" width="8.8" height="8.8" rx="0.8"/></g><rect x="3.9" y="3.9" width="6.2" height="6.2" fill="#aee6c4"/><rect x="5" y="5" width="4" height="4" rx="0.8" fill="#2a9a5c"/></svg></div>
<div class="t" style="left:266.5px;top:261.30px">IT Improve...</div>
<div class="a" style="left:331.5px;top:260.60px;width:14px;height:14px"><svg width="14" height="14" viewBox="0 0 14 14"><path d="M2.33 9.13 L10.93 0.53 L13.47 3.07 L4.87 11.67 Z" fill="#505050"/><path d="M3.6 10.4 L12.2 1.8" stroke="#e0e0e0" stroke-width="0.9"/><path d="M2.33 9.13 L4.87 11.67 L0.9 13.1 Z" fill="#8a8a8a"/></svg></div>
<div class="t" style="left:349px;top:261.30px">Draft</div>
<div class="dot" style="left:441.8px;top:260.90px;background:#f2ac47"></div>
<div class="t" style="left:458.6px;top:261.30px">Medium</div>
<div class="dot" style="left:524.5px;top:260.90px;background:#dcd9ef"></div>
<div class="t" style="left:541.3px;top:261.30px">Low</div>
<div class="dot" style="left:607px;top:260.90px;background:#dcd9ef"></div>
<div class="t" style="left:623.8px;top:261.30px">Low</div>
<div class="dot" style="left:689.5px;top:260.90px;background:#71be3a"></div>
<div class="t" style="left:706.3px;top:261.30px">High</div>
<div class="cell" style="left:769px;top:255.60px;width:82.5px;height:23.5px;background:#d6b719;text-align:center;-webkit-text-stroke:0.45px #fff">5</div>
<div class="t" style="left:851.5px;top:261.30px;width:78.5px;text-align:right">0.00</div>
<div class="t" style="left:1016.5px;top:261.30px;width:79px;text-align:right">0 €</div>
<div class="t" style="left:1098.5px;top:261.30px;width:56px;text-align:right">0</div>
<div class="cb" style="left:4.299999999999997px;top:286.80px"></div>
<div class="t" style="left:47.8px;top:286.80px;letter-spacing:-0.35px">REQ 012</div>
<div class="t" style="left:131px;top:286.80px">Procuring education ...</div>
<div class="a" style="left:249.5px;top:286.10px;width:14px;height:14px"><svg width="14" height="14" viewBox="0 0 14 14"><g fill="#3e3e3e"><rect x="4.2" y="0.6" width="1.4" height="3"/><rect x="8.2" y="0.6" width="1.4" height="3"/><rect x="4.2" y="10.4" width="1.4" height="3"/><rect x="8.2" y="10.4" width="1.4" height="3"/><rect x="0.4" y="4.4" width="3" height="1.4"/><rect x="0.4" y="8.2" width="3" height="1.4"/><rect x="10.4" y="4.4" width="3" height="1.4"/><rect x="10.4" y="8.2" width="3" height="1.4"/><rect x="2.6" y="2.6" width="8.8" height="8.8" rx="0.8"/></g><rect x="3.9" y="3.9" width="6.2" height="6.2" fill="#aee6c4"/><rect x="5" y="5" width="4" height="4" rx="0.8" fill="#2a9a5c"/></svg></div>
<div class="t" style="left:266.5px;top:286.80px">IT Improve...</div>
<div class="a" style="left:331.5px;top:286.10px;width:14px;height:14px"><svg width="14" height="14" viewBox="0 0 14 14"><path d="M2.33 9.13 L10.93 0.53 L13.47 3.07 L4.87 11.67 Z" fill="#505050"/><path d="M3.6 10.4 L12.2 1.8" stroke="#e0e0e0" stroke-width="0.9"/><path d="M2.33 9.13 L4.87 11.67 L0.9 13.1 Z" fill="#8a8a8a"/></svg></div>
<div class="t" style="left:349px;top:286.80px">Draft</div>
<div class="dot" style="left:441.8px;top:286.40px;background:#f2ac47"></div>
<div class="t" style="left:458.6px;top:286.80px">Medium</div>
<div class="dot" style="left:524.5px;top:286.40px;background:#71be3a"></div>
<div class="t" style="left:541.3px;top:286.80px">High</div>
<div class="dot" style="left:607px;top:286.40px;background:#dcd9ef"></div>
<div class="t" style="left:623.8px;top:286.80px">Low</div>
<div class="dot" style="left:689.5px;top:286.40px;background:#dcd9ef"></div>
<div class="t" style="left:706.3px;top:286.80px">Low</div>
<div class="cell" style="left:769px;top:281.10px;width:82.5px;height:23.5px;background:#d6b719;text-align:center;-webkit-text-stroke:0.45px #fff">5</div>
<div class="t" style="left:851.5px;top:286.80px;width:78.5px;text-align:right">0.00</div>
<div class="t" style="left:1016.5px;top:286.80px;width:79px;text-align:right">0 €</div>
<div class="t" style="left:1098.5px;top:286.80px;width:56px;text-align:right">0</div>
<div class="cb" style="left:4.299999999999997px;top:312.30px"></div>
<div class="t" style="left:47.8px;top:312.30px;letter-spacing:-0.35px">REQ 013</div>
<div class="t" style="left:131px;top:312.30px">Evening way luckily s...</div>
<div class="a" style="left:249.5px;top:311.60px;width:14px;height:14px"><svg width="14" height="14" viewBox="0 0 14 14"><path d="M1.4 4.4 H3.6 V0.2 H6.6 L7.8 1.6 H10.2 V13.2 H1.4 Z" fill="#4a4a4a"/><g fill="#a0a0a0" transform="translate(-0.6 0)"><rect x="3" y="6" width="1.2" height="1"/><rect x="5.3" y="3.4" width="1.2" height="1"/><rect x="8.1" y="3.4" width="1.2" height="1"/><rect x="3" y="8.6" width="1.2" height="1"/><rect x="5.3" y="6" width="1.2" height="1"/><rect x="8.1" y="6" width="1.2" height="1"/><rect x="3" y="11.1" width="1.2" height="1"/><rect x="5.3" y="8.6" width="1.2" height="1"/><rect x="8.1" y="8.6" width="1.2" height="1"/><rect x="5.3" y="11.1" width="1.2" height="1"/><rect x="8.1" y="11.1" width="1.2" height="1"/></g></svg></div>
<div class="t" style="left:266.5px;top:312.30px">Corporate ...</div>
<div class="a" style="left:331.5px;top:311.60px;width:14px;height:14px"><svg width="14" height="14" viewBox="0 0 14 14"><path d="M2.33 9.13 L10.93 0.53 L13.47 3.07 L4.87 11.67 Z" fill="#505050"/><path d="M3.6 10.4 L12.2 1.8" stroke="#e0e0e0" stroke-width="0.9"/><path d="M2.33 9.13 L4.87 11.67 L0.9 13.1 Z" fill="#8a8a8a"/></svg></div>
<div class="t" style="left:349px;top:312.30px">Draft</div>
<div class="dot" style="left:441.8px;top:311.90px;background:#71be3a"></div>
<div class="dot" style="left:444.8px;top:314.90px;width:7px;height:7px;background:#417f24"></div>
<div class="t" style="left:458.6px;top:312.30px">Very high</div>
<div class="dot" style="left:524.5px;top:311.90px;background:#f2ac47"></div>
<div class="t" style="left:541.3px;top:312.30px">Medium</div>
<div class="dot" style="left:607px;top:311.90px;background:#71be3a"></div>
<div class="t" style="left:623.8px;top:312.30px">High</div>
<div class="dot" style="left:689.5px;top:311.90px;background:#71be3a"></div>
<div class="dot" style="left:692.5px;top:314.90px;width:7px;height:7px;background:#417f24"></div>
<div class="t" style="left:706.3px;top:312.30px">Very high</div>
<div class="cell" style="left:769px;top:306.60px;width:82.5px;height:23.5px;background:#a3c67c;text-align:center;-webkit-text-stroke:0.45px #fff">8</div>
<div class="t" style="left:851.5px;top:312.30px;width:78.5px;text-align:right">0.00</div>
<div class="t" style="left:1016.5px;top:312.30px;width:79px;text-align:right">0 €</div>
<div class="t" style="left:1098.5px;top:312.30px;width:56px;text-align:right">0</div>
<div class="cb" style="left:4.299999999999997px;top:337.80px"></div>
<div class="t" style="left:47.8px;top:337.80px;letter-spacing:-0.35px">REQ 014</div>
<div class="t" style="left:131px;top:337.80px">Tiled say decay spoil ...</div>
<div class="a" style="left:249.5px;top:337.10px;width:14px;height:14px"><svg width="14" height="14" viewBox="0 0 14 14"><rect x="0.6" y="0.6" width="12.8" height="12.8" fill="#fff" stroke="#8a8a8a" stroke-width="1.2"/><path d="M2.2 11.8 V7.2 L4 6.4 L5.5 5.2 L7 6 L9 4.6 L11.8 3 V11.8 Z" fill="#0f9a3c"/><path d="M2.2 11.8 H11.8" stroke="#a8e6b8" stroke-width="0.8"/></svg></div>
<div class="t" style="left:266.5px;top:337.80px">Business I...</div>
<div class="a" style="left:331.5px;top:337.10px;width:14px;height:14px"><svg width="14" height="14" viewBox="0 0 14 14"><path d="M2.33 9.13 L10.93 0.53 L13.47 3.07 L4.87 11.67 Z" fill="#505050"/><path d="M3.6 10.4 L12.2 1.8" stroke="#e0e0e0" stroke-width="0.9"/><path d="M2.33 9.13 L4.87 11.67 L0.9 13.1 Z" fill="#8a8a8a"/></svg></div>
<div class="t" style="left:349px;top:337.80px">Draft</div>
<div class="dot" style="left:441.8px;top:337.40px;background:#71be3a"></div>
<div class="dot" style="left:444.8px;top:340.40px;width:7px;height:7px;background:#417f24"></div>
<div class="t" style="left:458.6px;top:337.80px">Very high</div>
<div class="dot" style="left:524.5px;top:337.40px;background:#71be3a"></div>
<div class="t" style="left:541.3px;top:337.80px">High</div>
<div class="dot" style="left:607px;top:337.40px;background:#dcd9ef"></div>
<div class="t" style="left:623.8px;top:337.80px">Low</div>
<div class="dot" style="left:689.5px;top:337.40px;background:#71be3a"></div>
<div class="dot" style="left:692.5px;top:340.40px;width:7px;height:7px;background:#417f24"></div>
<div class="t" style="left:706.3px;top:337.80px">Very high</div>
<div class="cell" style="left:769px;top:332.10px;width:82.5px;height:23.5px;background:#a3c67c;text-align:center;-webkit-text-stroke:0.45px #fff">8</div>
<div class="t" style="left:851.5px;top:337.80px;width:78.5px;text-align:right">0.00</div>
<div class="t" style="left:1016.5px;top:337.80px;width:79px;text-align:right">0 €</div>
<div class="t" style="left:1098.5px;top:337.80px;width:56px;text-align:right">0</div>
<div class="cb" style="left:4.299999999999997px;top:363.30px"></div>
<div class="t" style="left:47.8px;top:363.30px;letter-spacing:-0.35px">REQ 015</div>
<div class="t" style="left:131px;top:363.30px">Inhabit hearing perha...</div>
<div class="a" style="left:249.5px;top:362.60px;width:14px;height:14px"><svg width="14" height="14" viewBox="0 0 14 14"><path d="M1.2 8 L3 1.4 H11 L12.8 8" fill="none" stroke="#444" stroke-width="1.1" stroke-linejoin="round"/><path d="M0.6 7.4 H4.4 L6 9.6 H8 L9.6 7.4 H13.4 V12.4 H0.6 Z" fill="#3a3a3a"/></svg></div>
<div class="t" style="left:266.5px;top:363.30px">Admin</div>
<div class="a" style="left:331.5px;top:362.60px;width:14px;height:14px"><svg width="14" height="14" viewBox="0 0 14 14"><path d="M8.6 5 L1.2 12.6" stroke="#f0954d" stroke-width="1.8" stroke-linecap="round"/><rect x="4.6" y="2.6" width="9" height="4" rx="0.6" fill="#ed8533" transform="rotate(45 9.1 4.6)"/><rect x="7.1" y="2.6" width="4" height="4" fill="#e2711a" transform="rotate(45 9.1 4.6)"/></svg></div>
<div class="t" style="left:349px;top:363.30px">Business case</div>
<div class="dot" style="left:441.8px;top:362.90px;background:#dcd9ef"></div>
<div class="t" style="left:458.6px;top:363.30px">Low</div>
<div class="dot" style="left:524.5px;top:362.90px;background:#71be3a"></div>
<div class="t" style="left:541.3px;top:363.30px">High</div>
<div class="dot" style="left:607px;top:362.90px;background:#f2ac47"></div>
<div class="t" style="left:623.8px;top:363.30px">Medium</div>
<div class="dot" style="left:689.5px;top:362.90px;background:#f2ac47"></div>
<div class="t" style="left:706.3px;top:363.30px">Medium</div>
<div class="cell" style="left:769px;top:357.60px;width:82.5px;height:23.5px;background:#d6b719;text-align:center;-webkit-text-stroke:0.45px #fff">5</div>
<div class="cell" style="left:851.5px;top:357.60px;width:82.2px;height:23.5px;background:#f8766b;text-align:right;padding-right:3.8px">-88,235.18</div>
<div class="cell" style="left:933.7px;top:357.60px;width:83px;height:23.5px;background:#f8766b;text-align:right;padding-right:4.5px">-65 %</div>
<div class="t" style="left:1016.5px;top:363.30px;width:79px;text-align:right">100,000 €</div>
<div class="t" style="left:1098.5px;top:363.30px;width:56px;text-align:right">0</div>
<div class="cb" style="left:4.299999999999997px;top:388.80px"></div>
<div class="t" style="left:47.8px;top:388.80px;letter-spacing:-0.35px">REQ 016</div>
<div class="t" style="left:131px;top:388.80px">Unsatiable it consider...</div>
<div class="a" style="left:249.5px;top:388.10px;width:14px;height:14px"><svg width="14" height="14" viewBox="0 0 14 14"><rect x="0.6" y="0.6" width="12.8" height="12.8" fill="#fff" stroke="#8a8a8a" stroke-width="1.2"/><path d="M2.2 11.8 V7.2 L4 6.4 L5.5 5.2 L7 6 L9 4.6 L11.8 3 V11.8 Z" fill="#0f9a3c"/><path d="M2.2 11.8 H11.8" stroke="#a8e6b8" stroke-width="0.8"/></svg></div>
<div class="t" style="left:266.5px;top:388.80px">Business I...</div>
<div class="a" style="left:331.5px;top:388.10px;width:14px;height:14px"><svg width="14" height="14" viewBox="0 0 14 14"><path d="M2.33 9.13 L10.93 0.53 L13.47 3.07 L4.87 11.67 Z" fill="#505050"/><path d="M3.6 10.4 L12.2 1.8" stroke="#e0e0e0" stroke-width="0.9"/><path d="M2.33 9.13 L4.87 11.67 L0.9 13.1 Z" fill="#8a8a8a"/></svg></div>
<div class="t" style="left:349px;top:388.80px">Draft</div>
<div class="dot" style="left:441.8px;top:388.40px;background:#71be3a"></div>
<div class="dot" style="left:444.8px;top:391.40px;width:7px;height:7px;background:#417f24"></div>
<div class="t" style="left:458.6px;top:388.80px">Very high</div>
<div class="dot" style="left:524.5px;top:388.40px;background:#71be3a"></div>
<div class="t" style="left:541.3px;top:388.80px">High</div>
<div class="dot" style="left:607px;top:388.40px;background:#71be3a"></div>
<div class="t" style="left:623.8px;top:388.80px">High</div>
<div class="dot" style="left:689.5px;top:388.40px;background:#f2ac47"></div>
<div class="t" style="left:706.3px;top:388.80px">Medium</div>
<div class="cell" style="left:769px;top:383.10px;width:82.5px;height:23.5px;background:#a3c67c;text-align:center;-webkit-text-stroke:0.45px #fff">7</div>
<div class="t" style="left:851.5px;top:388.80px;width:78.5px;text-align:right">0.00</div>
<div class="t" style="left:1016.5px;top:388.80px;width:79px;text-align:right">0 €</div>
<div class="t" style="left:1098.5px;top:388.80px;width:56px;text-align:right">0</div>
<div class="cb" style="left:4.299999999999997px;top:414.30px"></div>
<div class="t" style="left:47.8px;top:414.30px;letter-spacing:-0.35px">REQ 017</div>
<div class="t" style="left:131px;top:414.30px">Oh to talking improve ...</div>
<div class="a" style="left:249.5px;top:413.60px;width:14px;height:14px"><svg width="14" height="14" viewBox="0 0 14 14"><path d="M1.4 4.4 H3.6 V0.2 H6.6 L7.8 1.6 H10.2 V13.2 H1.4 Z" fill="#4a4a4a"/><g fill="#a0a0a0" transform="translate(-0.6 0)"><rect x="3" y="6" width="1.2" height="1"/><rect x="5.3" y="3.4" width="1.2" height="1"/><rect x="8.1" y="3.4" width="1.2" height="1"/><rect x="3" y="8.6" width="1.2" height="1"/><rect x="5.3" y="6" width="1.2" height="1"/><rect x="8.1" y="6" width="1.2" height="1"/><rect x="3" y="11.1" width="1.2" height="1"/><rect x="5.3" y="8.6" width="1.2" height="1"/><rect x="8.1" y="8.6" width="1.2" height="1"/><rect x="5.3" y="11.1" width="1.2" height="1"/><rect x="8.1" y="11.1" width="1.2" height="1"/></g></svg></div>
<div class="t" style="left:266.5px;top:414.30px">Corporate ...</div>
<div class="a" style="left:331.5px;top:413.60px;width:14px;height:14px"><svg width="14" height="14" viewBox="0 0 14 14"><path d="M2.33 9.13 L10.93 0.53 L13.47 3.07 L4.87 11.67 Z" fill="#505050"/><path d="M3.6 10.4 L12.2 1.8" stroke="#e0e0e0" stroke-width="0.9"/><path d="M2.33 9.13 L4.87 11.67 L0.9 13.1 Z" fill="#8a8a8a"/></svg></div>
<div class="t" style="left:349px;top:414.30px">Draft</div>
<div class="dot" style="left:441.8px;top:413.90px;background:#71be3a"></div>
<div class="t" style="left:458.6px;top:414.30px">High</div>
<div class="dot" style="left:524.5px;top:413.90px;background:#71be3a"></div>
<div class="t" style="left:541.3px;top:414.30px">High</div>
<div class="dot" style="left:607px;top:413.90px;background:#f2ac47"></div>
<div class="t" style="left:623.8px;top:414.30px">Medium</div>
<div class="dot" style="left:689.5px;top:413.90px;background:#71be3a"></div>
<div class="dot" style="left:692.5px;top:416.90px;width:7px;height:7px;background:#417f24"></div>
<div class="t" style="left:706.3px;top:414.30px">Very high</div>
<div class="cell" style="left:769px;top:408.60px;width:82.5px;height:23.5px;background:#a3c67c;text-align:center;-webkit-text-stroke:0.45px #fff">7</div>
<div class="t" style="left:851.5px;top:414.30px;width:78.5px;text-align:right">0.00</div>
<div class="t" style="left:1016.5px;top:414.30px;width:79px;text-align:right">0 €</div>
<div class="t" style="left:1098.5px;top:414.30px;width:56px;text-align:right">0</div>
<div class="cb" style="left:4.299999999999997px;top:439.80px"></div>
<div class="t" style="left:47.8px;top:439.80px;letter-spacing:-0.35px">REQ 018</div>
<div class="t" style="left:131px;top:439.80px">Excellence decisively ...</div>
<div class="a" style="left:249.5px;top:439.10px;width:14px;height:14px"><svg width="14" height="14" viewBox="0 0 14 14"><g fill="#3e3e3e"><rect x="4.2" y="0.6" width="1.4" height="3"/><rect x="8.2" y="0.6" width="1.4" height="3"/><rect x="4.2" y="10.4" width="1.4" height="3"/><rect x="8.2" y="10.4" width="1.4" height="3"/><rect x="0.4" y="4.4" width="3" height="1.4"/><rect x="0.4" y="8.2" width="3" height="1.4"/><rect x="10.4" y="4.4" width="3" height="1.4"/><rect x="10.4" y="8.2" width="3" height="1.4"/><rect x="2.6" y="2.6" width="8.8" height="8.8" rx="0.8"/></g><rect x="3.9" y="3.9" width="6.2" height="6.2" fill="#aee6c4"/><rect x="5" y="5" width="4" height="4" rx="0.8" fill="#2a9a5c"/></svg></div>
<div class="t" style="left:266.5px;top:439.80px">IT Improve...</div>
<div class="a" style="left:331.5px;top:439.10px;width:14px;height:14px"><svg width="14" height="14" viewBox="0 0 14 14"><path d="M2.33 9.13 L10.93 0.53 L13.47 3.07 L4.87 11.67 Z" fill="#505050"/><path d="M3.6 10.4 L12.2 1.8" stroke="#e0e0e0" stroke-width="0.9"/><path d="M2.33 9.13 L4.87 11.67 L0.9 13.1 Z" fill="#8a8a8a"/></svg></div>
<div class="t" style="left:349px;top:439.80px">Draft</div>
<div class="dot" style="left:441.8px;top:439.40px;background:#dcd9ef"></div>
<div class="t" style="left:458.6px;top:439.80px">Low</div>
<div class="dot" style="left:524.5px;top:439.40px;background:#71be3a"></div>
<div class="t" style="left:541.3px;top:439.80px">High</div>
<div class="dot" style="left:607px;top:439.40px;background:#f2ac47"></div>
<div class="t" style="left:623.8px;top:439.80px">Medium</div>
<div class="dot" style="left:689.5px;top:439.40px;background:#71be3a"></div>
<div class="dot" style="left:692.5px;top:442.40px;width:7px;height:7px;background:#417f24"></div>
<div class="t" style="left:706.3px;top:439.80px">Very high</div>
<div class="cell" style="left:769px;top:434.10px;width:82.5px;height:23.5px;background:#a3c67c;text-align:center;-webkit-text-stroke:0.45px #fff">6</div>
<div class="t" style="left:851.5px;top:439.80px;width:78.5px;text-align:right">0.00</div>
<div class="t" style="left:1016.5px;top:439.80px;width:79px;text-align:right">0 €</div>
<div class="t" style="left:1098.5px;top:439.80px;width:56px;text-align:right">0</div>
<div class="cb" style="left:4.299999999999997px;top:465.30px"></div>
<div class="t" style="left:47.8px;top:465.30px;letter-spacing:-0.35px">REQ 019</div>
<div class="t" style="left:131px;top:465.30px">So if on advanced ad...</div>
<div class="a" style="left:249.5px;top:464.60px;width:14px;height:14px"><svg width="14" height="14" viewBox="0 0 14 14"><rect x="0.6" y="0.6" width="12.8" height="12.8" fill="#fff" stroke="#8a8a8a" stroke-width="1.2"/><path d="M2.2 11.8 V7.2 L4 6.4 L5.5 5.2 L7 6 L9 4.6 L11.8 3 V11.8 Z" fill="#0f9a3c"/><path d="M2.2 11.8 H11.8" stroke="#a8e6b8" stroke-width="0.8"/></svg></div>
<div class="t" style="left:266.5px;top:465.30px">Business I...</div>
<div class="a" style="left:331.5px;top:464.60px;width:14px;height:14px"><svg width="14" height="14" viewBox="0 0 14 14"><path d="M2.33 9.13 L10.93 0.53 L13.47 3.07 L4.87 11.67 Z" fill="#505050"/><path d="M3.6 10.4 L12.2 1.8" stroke="#e0e0e0" stroke-width="0.9"/><path d="M2.33 9.13 L4.87 11.67 L0.9 13.1 Z" fill="#8a8a8a"/></svg></div>
<div class="t" style="left:349px;top:465.30px">Draft</div>
<div class="dot" style="left:441.8px;top:464.90px;background:#f2ac47"></div>
<div class="t" style="left:458.6px;top:465.30px">Medium</div>
<div class="dot" style="left:524.5px;top:464.90px;background:#71be3a"></div>
<div class="dot" style="left:527.5px;top:467.90px;width:7px;height:7px;background:#417f24"></div>
<div class="t" style="left:541.3px;top:465.30px">Very High</div>
<div class="dot" style="left:607px;top:464.90px;background:#dcd9ef"></div>
<div class="t" style="left:623.8px;top:465.30px">Low</div>
<div class="dot" style="left:689.5px;top:464.90px;background:#dcd9ef"></div>
<div class="t" style="left:706.3px;top:465.30px">Low</div>
<div class="cell" style="left:769px;top:459.60px;width:82.5px;height:23.5px;background:#d6b719;text-align:center;-webkit-text-stroke:0.45px #fff">5</div>
<div class="t" style="left:851.5px;top:465.30px;width:78.5px;text-align:right">0.00</div>
<div class="t" style="left:1016.5px;top:465.30px;width:79px;text-align:right">0 €</div>
<div class="t" style="left:1098.5px;top:465.30px;width:56px;text-align:right">0</div>
<div class="a" style="left:769px;top:485.30px;width:82.5px;height:23px;background:#a3c67c"></div>
</div>
<div class="a" style="left:40.5px;top:636.8px;width:758px;height:5.6px;background:#5d6a73;border-radius:3px"></div>
<div class="a" style="left:1195.4px;top:146px;width:4.2px;height:470px;background:#4a5560"></div>
<div class="a" style="left:40.5px;top:642.6px;width:1158px;height:30.6px;background:#eceef0;border-top:1px solid #e2e4e6"></div>
<div class="a" style="left:0;top:673.2px;width:1200px;height:1.8px;background:#444"></div>
<svg class="a" style="left:51px;top:654px" width="11" height="12" viewBox="0 0 11 12"><rect x="1" y="0.8" width="2" height="10.4" fill="#9aa0a6"/><path d="M10 0.8 V11.2 L3.4 6 Z" fill="#9aa0a6"/></svg>
<svg class="a" style="left:78.5px;top:656px" width="8" height="8" viewBox="0 0 8 8"><path d="M6.4 0.6 V7.4 L1.4 4 Z" fill="#9aa0a6"/></svg>
<div class="a" style="left:96px;top:651px;width:1px;height:16px;background:#d8dadc"></div>
<div class="a" style="left:102px;top:653.5px;font-size:10.5px;line-height:12px;color:#666">Page</div>
<div class="a" style="left:133px;top:650.5px;width:23.5px;height:17px;background:#fff;border-radius:2px;border:1px solid #e6e6e6"></div>
<div class="a" style="left:138.5px;top:653.5px;font-size:10.5px;line-height:12px;color:#555">1</div>
<div class="a" style="left:163px;top:653.5px;font-size:10.5px;line-height:12px;color:#666">of 1</div>
<div class="a" style="left:186px;top:651px;width:1px;height:16px;background:#d8dadc"></div>
<svg class="a" style="left:197px;top:656px" width="8" height="8" viewBox="0 0 8 8"><path d="M1.6 0.6 V7.4 L6.6 4 Z" fill="#9aa0a6"/></svg>
<svg class="a" style="left:220px;top:654px" width="11" height="12" viewBox="0 0 11 12"><path d="M1 0.8 V11.2 L7.6 6 Z" fill="#9aa0a6"/><rect x="8" y="0.8" width="2" height="10.4" fill="#9aa0a6"/></svg>
<div class="a" style="left:241px;top:651px;width:1px;height:16px;background:#d8dadc"></div>
<svg class="a" style="left:249px;top:652px" width="15" height="15" viewBox="0 0 15 15"><path d="M12.2 5.6 A5 5 0 0 0 2.8 5.2" fill="none" stroke="#3f454c" stroke-width="1.9"/><path d="M2.8 9.4 A5 5 0 0 0 12.2 9.8" fill="none" stroke="#3f454c" stroke-width="1.9"/><path d="M13.6 1.8 V6.6 H8.8 Z" fill="#3f454c"/><path d="M1.4 13.2 V8.4 H6.2 Z" fill="#3f454c"/></svg>
<div class="a" style="left:272px;top:650.5px;width:96px;height:17px;background:#fff;border-radius:2px"></div>
<svg class="a" style="left:275px;top:652px" width="10" height="13" viewBox="0 0 10 13"><path d="M1 1 H6.4 L9 3.6 V12 H1 Z" fill="none" stroke="#555" stroke-width="1"/><path d="M3.2 5.6 L6.8 10 M6.8 5.6 L3.2 10" stroke="#555" stroke-width="0.9"/></svg>
<div class="a" style="left:292px;top:653.5px;font-size:10.5px;line-height:12px;color:#555">Export to Excel</div>
<div class="a" style="left:1044px;top:653.5px;font-size:10.5px;line-height:12px;color:#666;letter-spacing:-0.35px">Displaying 1 - 20 of 20</div>
<div class="a" style="left:1147px;top:650px;width:48.7px;height:18.3px;background:#f2f3f4;border:1px solid #e4e4e4;border-radius:3px"></div>
<div class="a" style="left:1148px;top:651px;width:27px;height:16.3px;background:#fff"></div>
<div class="a" style="left:1152.5px;top:653.5px;font-size:10.5px;line-height:12px;color:#555">50</div>
<svg class="a" style="left:1182px;top:657px" width="8" height="5" viewBox="0 0 8 5"><path d="M0.6 0.6 H7.4 L4 4.4 Z" fill="#555"/></svg>
</div></body></html>
